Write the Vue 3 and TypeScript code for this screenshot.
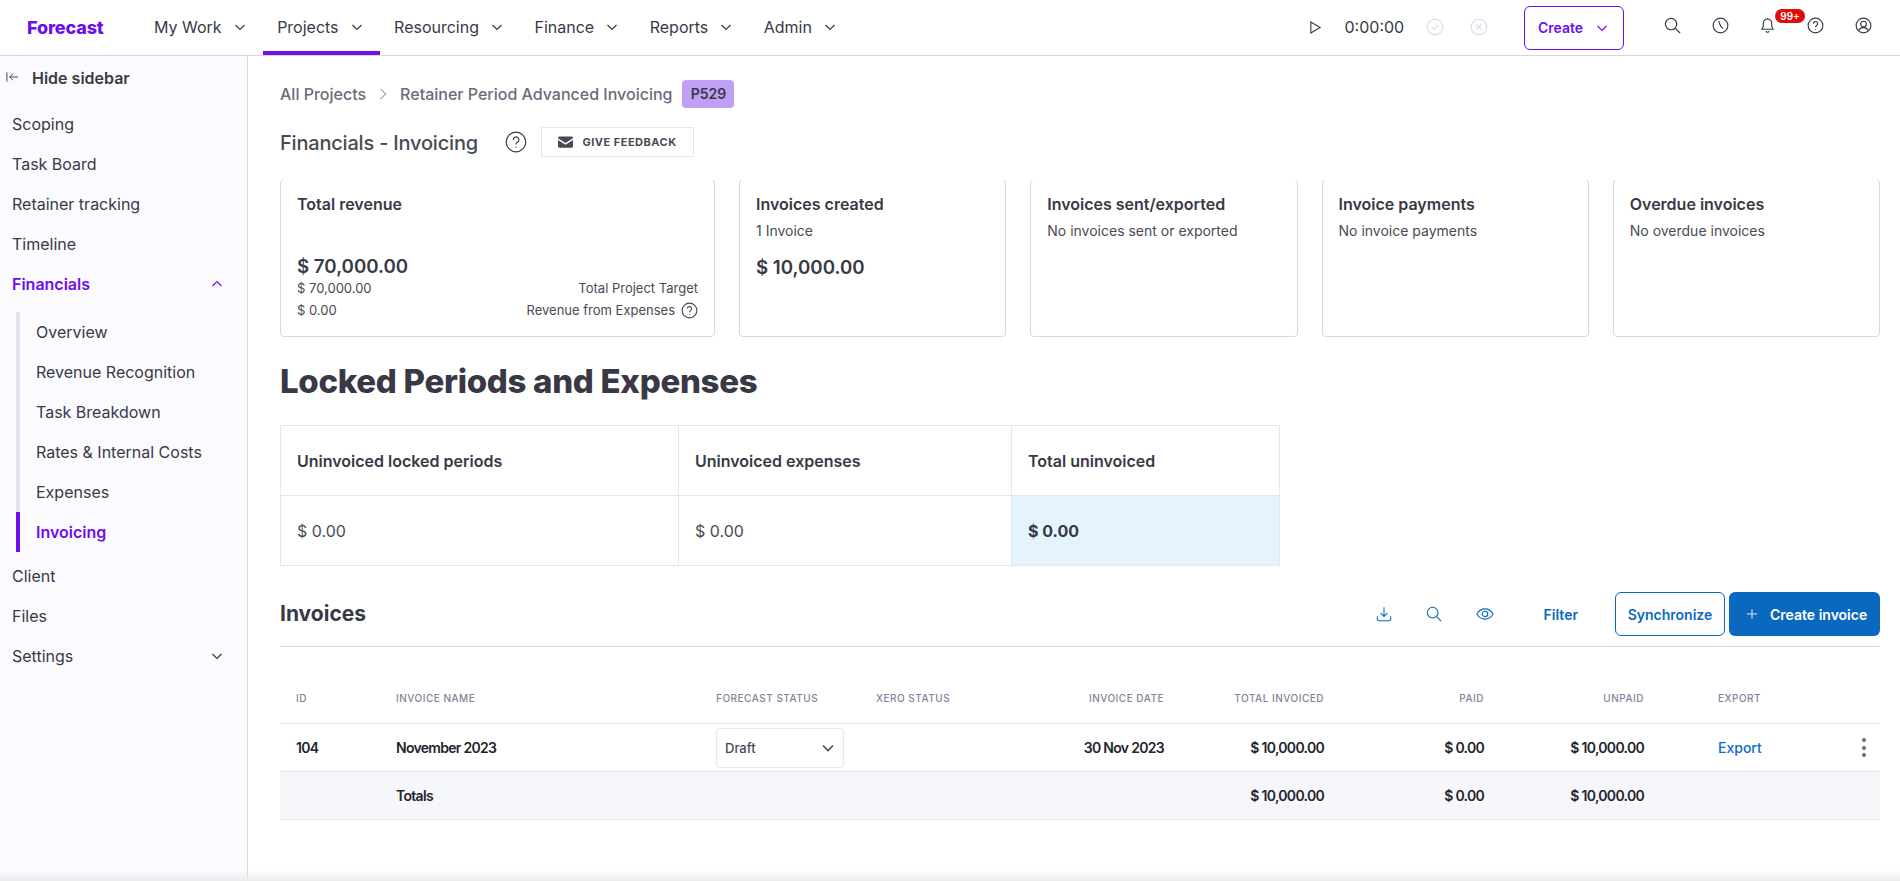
<script setup lang="ts">
const navItems = [
  { label: 'My Work', active: false },
  { label: 'Projects', active: true },
  { label: 'Resourcing', active: false },
  { label: 'Finance', active: false },
  { label: 'Reports', active: false },
  { label: 'Admin', active: false },
]
const subItems = ['Overview', 'Revenue Recognition', 'Task Breakdown', 'Rates & Internal Costs', 'Expenses']
const smallCards = [
  { title: 'Invoices sent/exported', sub: 'No invoices sent or exported' },
  { title: 'Invoice payments', sub: 'No invoice payments' },
  { title: 'Overdue invoices', sub: 'No overdue invoices' },
]
</script>

<template>
  <div class="app">
    <header class="topbar">
      <div class="logo">Forecast</div>
      <nav class="nav">
        <div v-for="n in navItems" :key="n.label" class="nav-item" :class="{ active: n.active }">
          <span>{{ n.label }}</span>
          <svg class="chev" viewBox="0 0 16 16"><path d="M3.5 6l4.5 4.5L12.5 6" /></svg>
        </div>
      </nav>
      <div class="timer">
        <svg class="ic play" viewBox="0 0 14 16"><path d="M2 2l10 6-10 6z" /></svg>
        <span class="time">0:00:00</span>
        <svg class="ic faint" viewBox="0 0 18 18"><circle cx="9" cy="9" r="7.8" /><path d="M5.8 9.2l2.3 2.3 4.2-4.8" /></svg>
        <svg class="ic faint last" viewBox="0 0 18 18"><circle cx="9" cy="9" r="7.8" /><path d="M6.3 6.3l5.4 5.4M11.7 6.3l-5.4 5.4" /></svg>
      </div>
      <button class="create">
        <span>Create</span>
        <svg class="chev purple" viewBox="0 0 16 16"><path d="M3.5 6l4.5 4.5L12.5 6" /></svg>
      </button>
      <div class="tools">
        <svg class="tool search" viewBox="0 0 18 18"><circle cx="7.5" cy="7.5" r="6" /><path d="M12 12l5 5" /></svg>
        <svg class="tool clock" viewBox="0 0 18 18"><circle cx="9" cy="9" r="7.8" /><path d="M7 4.5L9.4 10l2.2 2.4" /></svg>
        <div class="bell-wrap">
          <svg class="tool bell" viewBox="0 0 16 18"><path d="M8 2a4.5 4.5 0 0 0-4.5 4.5V10L2 13h12l-1.5-3V6.500A4.500 4.500 0 0 0 8 2zM8 1v1M6.300 15a1.800 1.800 0 0 0 3.400 0" /></svg>
          <span class="badge">99+</span>
        </div>
        <svg class="tool help" viewBox="0 0 18 18"><circle cx="9" cy="9" r="7.800" /><path d="M6.800 7a2.200 2.200 0 1 1 3.400 1.900C9.400 9.400 9 9.900 9 10.800M9 12.600v.9" /></svg>
        <svg class="tool user" viewBox="0 0 18 18"><circle cx="9" cy="9" r="7.800" /><circle cx="9" cy="7.500" r="3" /><path d="M3.800 14.500c1-2.300 3-3.300 5.200-3.300s4.200 1 5.200 3.300" /></svg>
      </div>
    </header>

    <div class="body">
      <aside class="sidebar">
        <div class="hide-row">
          <svg class="hide-ic" viewBox="0 0 14 12"><path d="M1 1v10M13 6H4M7.500 2.500L4 6l3.500 3.500" /></svg>
          <span>Hide sidebar</span>
        </div>
        <div class="side-item">Scoping</div>
        <div class="side-item">Task Board</div>
        <div class="side-item">Retainer tracking</div>
        <div class="side-item">Timeline</div>
        <div class="side-item current">
          <span>Financials</span>
          <svg class="chev purple" viewBox="0 0 16 16"><path d="M3.500 10L8 5.500 12.500 10" /></svg>
        </div>
        <div class="sub-list">
          <div v-for="s in subItems" :key="s" class="sub-item">{{ s }}</div>
          <div class="sub-item on">Invoicing</div>
        </div>
        <div class="side-item">Client</div>
        <div class="side-item">Files</div>
        <div class="side-item">
          <span>Settings</span>
          <svg class="chev" viewBox="0 0 16 16"><path d="M3.500 6L8 10.500 12.500 6" /></svg>
        </div>
      </aside>

      <main class="content">
        <div class="crumbs">
          <span>All Projects</span>
          <svg class="crumb-sep" viewBox="0 0 10 16"><path d="M2 2l6 6-6 6" /></svg>
          <span>Retainer Period Advanced Invoicing</span>
          <span class="pill">P529</span>
        </div>
        <div class="title-row">
          <h2 class="page-title">Financials - Invoicing</h2>
          <svg class="q-ic" viewBox="0 0 22 22"><circle cx="11" cy="11" r="9.800" /><path d="M8.300 8.700a2.800 2.800 0 1 1 4.300 2.400c-1 .6-1.600 1.200-1.600 2.400M11 15.700v1" /></svg>
          <button class="feedback">
            <svg class="mail" viewBox="0 0 16 12"><path d="M0 1.500A1.500 1.500 0 0 1 1.500 0h13A1.500 1.500 0 0 1 16 1.500V2L8 7 0 2zM0 3.800l8 5 8-5v6.700a1.500 1.500 0 0 1-1.500 1.500h-13A1.500 1.500 0 0 1 0 10.500z" /></svg>
            <span>GIVE FEEDBACK</span>
          </button>
        </div>

        <div class="cards">
          <section class="card first">
            <div class="card-title">Total revenue</div>
            <div class="amount pushed">$ 70,000.00</div>
            <div class="meta"><span>$ 70,000.00</span><span>Total Project Target</span></div>
            <div class="meta second">
              <span>$ 0.00</span>
              <span class="meta-right">Revenue from Expenses
                <svg class="q-small" viewBox="0 0 18 18"><circle cx="9" cy="9" r="7.800" /><path d="M6.800 7a2.200 2.200 0 1 1 3.400 1.900C9.400 9.400 9 9.900 9 10.800M9 12.600v.9" /></svg>
              </span>
            </div>
          </section>
          <section class="card">
            <div class="card-title">Invoices created</div>
            <div class="card-sub">1 Invoice</div>
            <div class="amount gap">$ 10,000.00</div>
          </section>
          <section v-for="c in smallCards" :key="c.title" class="card">
            <div class="card-title">{{ c.title }}</div>
            <div class="card-sub">{{ c.sub }}</div>
          </section>
        </div>

        <h1 class="big">Locked Periods and Expenses</h1>

        <div class="locked">
          <div class="lcell head">Uninvoiced locked periods</div>
          <div class="lcell head">Uninvoiced expenses</div>
          <div class="lcell head end">Total uninvoiced</div>
          <div class="lcell low">$ 0.00</div>
          <div class="lcell low">$ 0.00</div>
          <div class="lcell low end total">$ 0.00</div>
        </div>

        <div class="inv-head">
          <h3 class="inv-title">Invoices</h3>
          <div class="inv-actions">
            <svg class="act" viewBox="0 0 18 18"><path d="M9 1.500v10M5.300 8L9 11.700 12.700 8M1.500 11.500V15a1.500 1.500 0 0 0 1.500 1.500h12a1.500 1.500 0 0 0 1.500-1.500v-3.500" /></svg>
            <svg class="act" viewBox="0 0 18 18"><circle cx="7.500" cy="7.500" r="6" /><path d="M12 12l5 5" /></svg>
            <svg class="act eye" viewBox="0 0 20 14"><path d="M1 7c2.200-3.800 5.300-5.700 9-5.700s6.800 1.900 9 5.700c-2.200 3.800-5.300 5.700-9 5.700S3.200 10.800 1 7z" /><circle cx="10" cy="7" r="3" /></svg>
            <span class="filter">Filter</span>
            <button class="sync">Synchronize</button>
            <button class="new-inv">
              <svg class="plus" viewBox="0 0 12 12"><path d="M6 1v10M1 6h10" /></svg>
              <span>Create invoice</span>
            </button>
          </div>
        </div>

        <div class="grid header-row">
          <span>ID</span><span>Invoice name</span><span>Forecast status</span><span>Xero status</span>
          <span class="r">Invoice date</span><span class="r">Total invoiced</span><span class="r">Paid</span><span class="r">Unpaid</span>
          <span class="exp">Export</span><span></span>
        </div>
        <div class="grid data-row">
          <span>104</span><span>November 2023</span>
          <span><div class="select"><span>Draft</span><svg class="chev dark" viewBox="0 0 16 16"><path d="M3 5.500l5 5 5-5" /></svg></div></span>
          <span></span>
          <span class="r">30 Nov 2023</span><span class="r">$ 10,000.00</span><span class="r">$ 0.00</span><span class="r">$ 10,000.00</span>
          <span class="exp link">Export</span>
          <span class="dots"><i></i><i></i><i></i></span>
        </div>
        <div class="grid data-row totals">
          <span></span><span>Totals</span><span></span><span></span><span></span>
          <span class="r">$ 10,000.00</span><span class="r">$ 0.00</span><span class="r">$ 10,000.00</span><span></span><span></span>
        </div>
      </main>
    </div>
    <div class="bottom-fade"></div>
  </div>
</template>

<style>
html, body { margin: 0; padding: 0; background: #fff; }
</style>

<style scoped>
.app {
  position: relative;
  height: 881px;
  overflow: hidden;
  font-family: Inter, "Noto Sans", sans-serif;
  color: #393946;
  background: #fff;
  display: flex;
  flex-direction: column;
}
svg { fill: none; stroke: currentColor; flex: none; display: block; }
button { font-family: inherit; cursor: pointer; }

.topbar {
  height: 55px;
  flex: none;
  border-bottom: 1px solid #d7d6de;
  display: flex;
  align-items: stretch;
}
.logo {
  width: 140px;
  flex: none;
  padding-left: 27px;
  box-sizing: border-box;
  font-size: 18px;
  font-weight: 800;
  color: #6e0fea;
  line-height: 56px;
  letter-spacing: -0.15px;
}
.nav { display: flex; }
.nav-item {
  display: flex;
  align-items: center;
  gap: 10px;
  padding: 2px 15.5px 0 14px;
  font-size: 16px;
  color: #393946;
  box-sizing: border-box;
  height: 55px;
  border-bottom: 4px solid transparent;
}
.nav-item.active { border-bottom-color: #6e0fea; }
.chev { width: 16px; height: 16px; stroke-width: 1.2; color: #393946; }
.chev.purple { color: #6e0fea; }
.chev.dark { stroke-width: 1.6; color: #4a4a55; }

.timer {
  margin-left: auto;
  display: flex;
  align-items: center;
  height: 54px;
}
.ic { width: 18px; height: 18px; }
.play { width: 13px; height: 15px; color: #393946; stroke-width: 1.2; margin-right: 23px; }
.time { font-size: 16px; width: 81px; color: #393946; }
.faint { color: #d9d8ea; stroke-width: 1.1; margin-right: 26px; }
.faint.last { margin-right: 24.5px; }
.create {
  align-self: center;
  margin-left: 12px;
  width: 100px;
  height: 44px;
  box-sizing: border-box;
  background: #fff;
  border: 1px solid #6e0fea;
  border-radius: 6px;
  color: #6e0fea;
  font-size: 14px;
  font-weight: 600;
  display: flex;
  align-items: center;
  justify-content: center;
  gap: 11px;
  padding: 0;
}
.tools {
  display: flex;
  align-items: center;
  margin-left: 40px;
  padding-bottom: 5px;
  padding-right: 28px;
}
.tool { width: 17px; height: 17px; color: #393946; stroke-width: 1.2; }
.search { margin-right: 31px; stroke-width: 1.3; }
.clock { margin-right: 31px; }
.bell-wrap { position: relative; margin-right: 32px; }
.bell { width: 15px; }
.badge {
  position: absolute;
  left: 15px;
  top: -8px;
  width: 30px;
  height: 14px;
  border-radius: 8px;
  background: #e00c0c;
  color: #fff;
  font-size: 10px;
  font-weight: 600;
  line-height: 14px;
  text-align: center;
}
.help { margin-right: 31px; }

.body { flex: 1; display: flex; min-height: 0; }
.sidebar {
  width: 248px;
  flex: none;
  box-sizing: border-box;
  background: #fbfbff;
  border-right: 1px solid #d7d6de;
}
.hide-row {
  height: 44px;
  margin-bottom: 4px;
  display: flex;
  align-items: center;
  padding-left: 6px;
  gap: 13px;
  font-size: 16px;
  font-weight: 600;
}
.hide-ic { width: 13px; height: 12px; stroke-width: 1; margin-top: -3px; }
.side-item {
  height: 40px;
  display: flex;
  align-items: center;
  justify-content: space-between;
  padding: 0 22px 0 12px;
  font-size: 16px;
}
.side-item.current { color: #6e0fea; font-weight: 600; }
.sub-list { margin: 8px 0 4px 16px; }
.sub-item {
  height: 40px;
  display: flex;
  align-items: center;
  padding-left: 16px;
  font-size: 16px;
  border-left: 4px solid #e3e3f0;
}
.sub-item.on { border-left-color: #6e0fea; color: #6e0fea; font-weight: 600; }

.content {
  flex: 1;
  min-width: 0;
  padding: 24px 20px 0 32px;
  box-sizing: border-box;
}
.crumbs {
  display: flex;
  align-items: center;
  height: 28px;
  font-size: 16px;
  font-weight: 500;
  color: #6b6b7b;
}
.crumb-sep { width: 10px; height: 14px; margin: 0 12px; stroke-width: 1.1; }
.pill {
  margin-left: 10px;
  width: 52px;
  height: 28px;
  border-radius: 4px;
  background: #c19ff5;
  color: #393946;
  font-size: 14px;
  font-weight: 600;
  line-height: 28px;
  text-align: center;
}
.title-row {
  display: flex;
  align-items: center;
  height: 30px;
  margin-top: 19px;
}
.page-title {
  margin: 0;
  padding-top: 2px;
  width: 225px;
  font-size: 20px;
  font-weight: 500;
  letter-spacing: -0.2px;
  color: #4a4a55;
  white-space: nowrap;
}
.q-ic { width: 22px; height: 22px; stroke-width: 1.2; color: #393946; }
.feedback {
  margin-left: 14px;
  width: 153px;
  height: 30px;
  box-sizing: border-box;
  background: #fff;
  border: 1px solid #e6e6ed;
  display: flex;
  align-items: center;
  justify-content: center;
  gap: 9px;
  font-size: 11px;
  font-weight: 700;
  letter-spacing: 0.5px;
  color: #4a4a55;
  padding: 0;
}
.mail { width: 15px; height: 12px; fill: #4a4a55; stroke: none; }

.cards {
  display: flex;
  gap: 24px;
  margin-top: 23px;
  height: 157px;
  overflow: hidden;
}
.card {
  flex: 1;
  min-width: 0;
  height: 158px;
  margin-top: -1px;
  box-sizing: border-box;
  padding: 14px 16px 16px;
  border: 1px solid #d8d8e3;
  border-radius: 4px;
  display: flex;
  flex-direction: column;
}
.card.first { flex: none; width: 435px; }
.card-title { font-size: 16px; line-height: 20px; font-weight: 600; color: #393946; }
.card-sub { font-size: 14px; line-height: 20px; margin-top: 7px; color: #4a4a55; }
.amount { font-size: 18.7px; line-height: 22px; font-weight: 600; color: #393946; }
.amount.pushed { margin-top: auto; }
.amount.gap { margin-top: 16px; }
.meta {
  display: flex;
  justify-content: space-between;
  font-size: 13px;
  line-height: 20px;
  color: #4a4a55;
}
.meta.second { margin-top: 2px; }
.meta-right { display: flex; align-items: center; gap: 6px; }
.q-small { width: 17px; height: 17px; stroke-width: 1.2; }

.big {
  margin: 22px 0 0;
  height: 44px;
  line-height: 44px;
  font-size: 33px;
  font-weight: 800;
  color: #393946;
  letter-spacing: -0.3px;
  white-space: nowrap;
}
.locked {
  margin-top: 22px;
  width: 1000px;
  display: grid;
  grid-template-columns: 398px 333px 267px;
  border: 1px solid #e6e6f2;
  box-sizing: border-box;
}
.lcell {
  height: 69px;
  box-sizing: border-box;
  display: flex;
  align-items: center;
  padding-left: 16px;
  font-size: 16px;
  border-right: 1px solid #e6e6f2;
}
.lcell.end { border-right: none; }
.lcell.head { height: 70px; font-weight: 600; border-bottom: 1px solid #e6e6f2; }
.lcell.low { color: #4a4a55; }
.lcell.total { background: #e5f3fe; font-weight: 700; color: #393946; }

.inv-head {
  margin-top: 26px;
  height: 55px;
  border-bottom: 1px solid #d7d6de;
  display: flex;
  justify-content: space-between;
  box-sizing: border-box;
  width: 1600px;
}
.inv-title { margin: 10px 0 0; font-size: 21px; font-weight: 700; line-height: 24px; color: #393946; }
.inv-actions { display: flex; align-items: flex-start; height: 44px; }
.act { width: 16px; height: 16px; color: #0a69bf; stroke-width: 1.2; margin-top: 14px; margin-right: 34px; }
.act.eye { width: 18px; height: 14px; margin-top: 15px; margin-right: 50px; }
.filter { font-size: 14px; font-weight: 600; color: #0a69bf; line-height: 46px; margin-right: 37px; }
.sync {
  width: 110px;
  height: 44px;
  box-sizing: border-box;
  background: #fff;
  border: 1px solid #0a69bf;
  border-radius: 6px;
  color: #0a69bf;
  font-size: 14px;
  font-weight: 600;
  padding: 0;
}
.new-inv {
  margin-left: 4px;
  width: 151px;
  height: 44px;
  background: #0a69bf;
  border: none;
  border-radius: 6px;
  color: #fff;
  font-size: 14px;
  font-weight: 600;
  display: flex;
  align-items: center;
  gap: 12px;
  padding: 0 0 0 17px;
  box-sizing: border-box;
}
.plus { width: 12px; height: 12px; stroke-width: 1; color: #dbe9f6; }

.grid {
  display: grid;
  grid-template-columns: 100px 320px 160px 160px 128px 160px 160px 160px 200px 36px;
  padding-left: 16px;
  align-items: center;
  box-sizing: border-box;
  width: 1600px;
}
.r { text-align: right; }
.exp { padding-left: 74px; }
.header-row {
  margin-top: 39px;
  height: 38px;
  padding-bottom: 14px;
  border-bottom: 1px solid #e6e6e8;
  font-size: 10px;
  font-weight: 500;
  letter-spacing: 0.5px;
  text-transform: uppercase;
  color: #83829c;
  line-height: 12px;
}
.data-row {
  height: 48px;
  border-bottom: 1px solid #e6e6e8;
  font-size: 14px;
  font-weight: 600;
  letter-spacing: -0.7px;
  color: #24242c;
}
.totals { background: #f6f7fb; }
.link { color: #0a6cc4; font-weight: 500; letter-spacing: 0; }
.select {
  width: 128px;
  height: 40px;
  box-sizing: border-box;
  border: 1px solid #e6e6ed;
  border-radius: 4px;
  display: flex;
  align-items: center;
  justify-content: space-between;
  padding: 0 7px 0 8px;
  font-size: 13px;
  font-weight: 500;
  letter-spacing: 0;
  color: #4a4a55;
  background: #fff;
}
.dots { display: flex; flex-direction: column; align-items: center; gap: 3.5px; padding-left: 3px; }
.dots i { width: 4px; height: 4px; border-radius: 50%; background: #6a6a72; display: block; }

.bottom-fade {
  position: absolute;
  left: 0;
  right: 0;
  bottom: 0;
  height: 11px;
  background: linear-gradient(to bottom, rgba(235,235,238,0), #ebebee);
  pointer-events: none;
}
</style>
